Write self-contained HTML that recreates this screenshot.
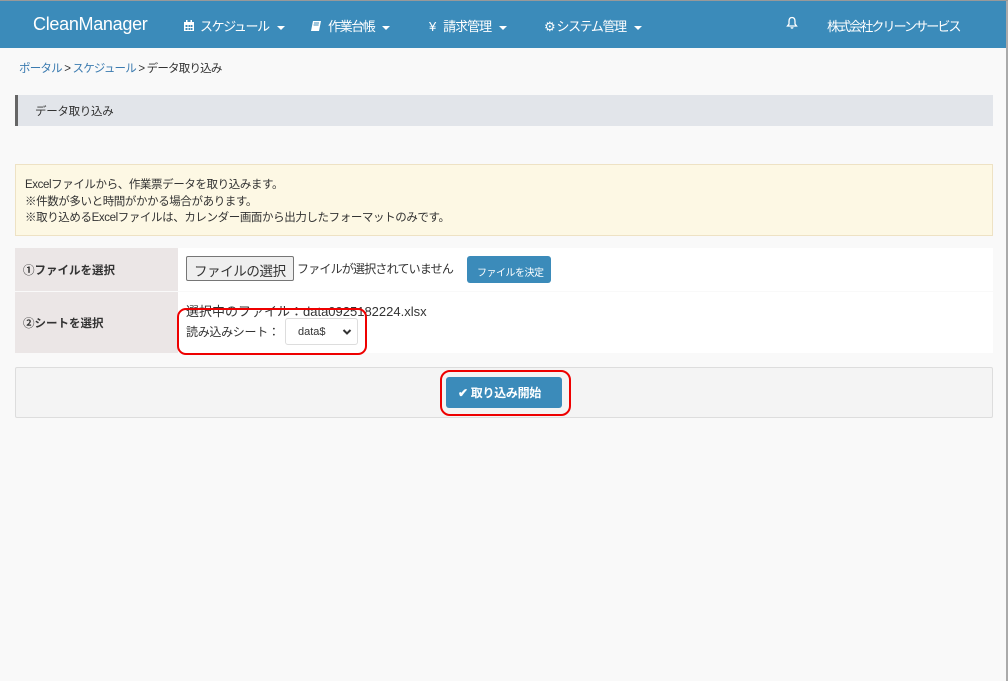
<!DOCTYPE html>
<html><head><meta charset="utf-8"><style>
*{box-sizing:border-box;margin:0;padding:0}
body{width:1008px;height:680px;overflow:hidden;background:#f9f9f9;font-family:"Liberation Sans","Noto Sans CJK JP",sans-serif;font-size:11.5px;color:#333;position:relative;border-top:1px solid #999}
.rb{position:absolute;right:0;top:0;width:2px;height:680px;background:#aaa}
.nav{position:absolute;left:0;top:0;width:1006px;height:47px;background:#3b8bba;color:#fff}
.nav span{position:absolute;top:15px;font-size:13px;white-space:nowrap;letter-spacing:-1.4px}
.car{display:inline-block;border-left:4px solid transparent;border-right:4px solid transparent;border-top:4px solid #fff;vertical-align:middle;margin-left:8px}
.a{position:absolute;white-space:nowrap}
.tbl{position:absolute;left:15px;width:978px;background:#fff}
.lab{position:absolute;left:0;top:0;bottom:0;width:163px;background:#ebe6e6;font-weight:bold;padding-left:8px;display:flex;align-items:center}
</style></head><body>
<div class="rb"></div>
<div class="nav">
<span style="left:33px;top:13px;font-size:18px;letter-spacing:-0.3px">CleanManager</span>
<span style="left:183px"><svg width="12" height="12" viewBox="0 0 12 12" style="vertical-align:-1px;margin-right:5px"><rect x="1" y="2" width="10" height="9" fill="#fff"/><g fill="#3b8bba"><rect x="2.5" y="5" width="2" height="2"/><rect x="5.5" y="5" width="2" height="2"/><rect x="8" y="5" width="1.5" height="2"/><rect x="2.5" y="8" width="2" height="2"/><rect x="5.5" y="8" width="2" height="2"/><rect x="8" y="8" width="1.5" height="2"/></g><rect x="3" y="0" width="1.5" height="3" fill="#fff"/><rect x="7.5" y="0" width="1.5" height="3" fill="#fff"/></svg>スケジュール<i class="car"></i></span>
<span style="left:310px"><svg width="12" height="12" viewBox="0 0 12 12" style="vertical-align:-1px;margin-right:6px"><path d="M3 1h8l-2 10H1z" fill="#fff"/><path d="M4 3h5M3.6 5h5" stroke="#3b8bba"/></svg>作業台帳<i class="car"></i></span>
<span style="left:429px;letter-spacing:-1px">¥&nbsp;&nbsp; 請求管理<i class="car"></i></span>
<span style="left:544px">⚙ システム管理<i class="car"></i></span>
<span style="left:786px"><svg width="12" height="13" viewBox="0 0 12 13"><path d="M6 1.5C3.5 1.5 3 3.5 3 5.5v2.5L1.5 10h9L9 8V5.5C9 3.5 8.5 1.5 6 1.5z" fill="none" stroke="#fff" stroke-width="1.3"/><path d="M4.5 11.3a1.5 1.5 0 0 0 3 0" fill="#fff"/></svg></span>
<span style="left:827px;letter-spacing:-1.9px">株式会社クリーンサービス</span>
</div>
<div class="a" style="left:19px;top:59px;letter-spacing:-0.8px"><span style="color:#3b7bb0">ポータル</span> &gt; <span style="color:#3b7bb0">スケジュール</span> &gt; データ取り込み</div>
<div class="a" style="left:15px;top:94px;width:978px;height:31px;background:#e2e5ea;border-left:3px solid #666;padding:8px 0 0 17px;letter-spacing:-0.3px">データ取り込み</div>
<div class="a" style="left:15px;top:163px;width:978px;height:72px;background:#fdf8e4;border:1px solid #eee2c4;padding:12px 0 0 9px;line-height:16.5px;letter-spacing:-0.4px">Excelファイルから、作業票データを取り込みます。<br>※件数が多いと時間がかかる場合があります。<br>※取り込めるExcelファイルは、カレンダー画面から出力したフォーマットのみです。</div>
<div class="tbl" style="top:247px;height:43px"><div class="lab">①ファイルを選択</div>
<div class="a" style="left:171px;top:8px;height:25px;width:108px;border:1px solid #767676;background:#efefef;border-radius:2px;font-size:13.5px;padding:3px 0 0 7px;letter-spacing:-0.4px">ファイルの選択</div>
<div class="a" style="left:282px;top:12px;font-size:12px;letter-spacing:-0.8px">ファイルが選択されていません</div>
<div class="a" style="left:452px;top:8px;width:84px;height:27px;background:#3b8bba;color:#fff;border-radius:3px;font-size:10px;padding:8px 0 0 10px;letter-spacing:-0.5px">ファイルを決定</div>
</div>
<div class="tbl" style="top:291px;height:61px"><div class="lab">②シートを選択</div>
<div class="a" style="left:171px;top:9px;font-size:13px;letter-spacing:0">選択中のファイル：data0925182224.xlsx</div>
<div class="a" style="left:171px;top:31px;font-size:12px;letter-spacing:-0.3px">読み込みシート：</div>
<div class="a" style="left:270px;top:26px;width:73px;height:27px;border:1px solid #ddd;border-radius:3px;background:#fff;padding:7px 0 0 12px;font-size:11px">data$ <svg width="10" height="8" viewBox="0 0 10 8" style="position:absolute;right:5px;top:9px"><path d="M1.5 2l3.5 3.5L8.5 2" fill="none" stroke="#333" stroke-width="2"/></svg></div>
</div>
<div class="a" style="left:177px;top:307px;width:190px;height:47px;border:2px solid #e00;border-radius:9px"></div>
<div class="a" style="left:15px;top:366px;width:978px;height:51px;background:#f4f4f4;border:1px solid #ddd;border-radius:2px"></div>
<div class="a" style="left:446px;top:376px;width:116px;height:31px;background:#3b8bba;color:#fff;border-radius:3px;font-weight:bold;padding:7px 0 0 12px;font-size:12px;letter-spacing:-0.3px">✔ 取り込み開始</div>
<div class="a" style="left:440px;top:369px;width:131px;height:46px;border:2px solid #e00;border-radius:10px"></div>
</body></html>
